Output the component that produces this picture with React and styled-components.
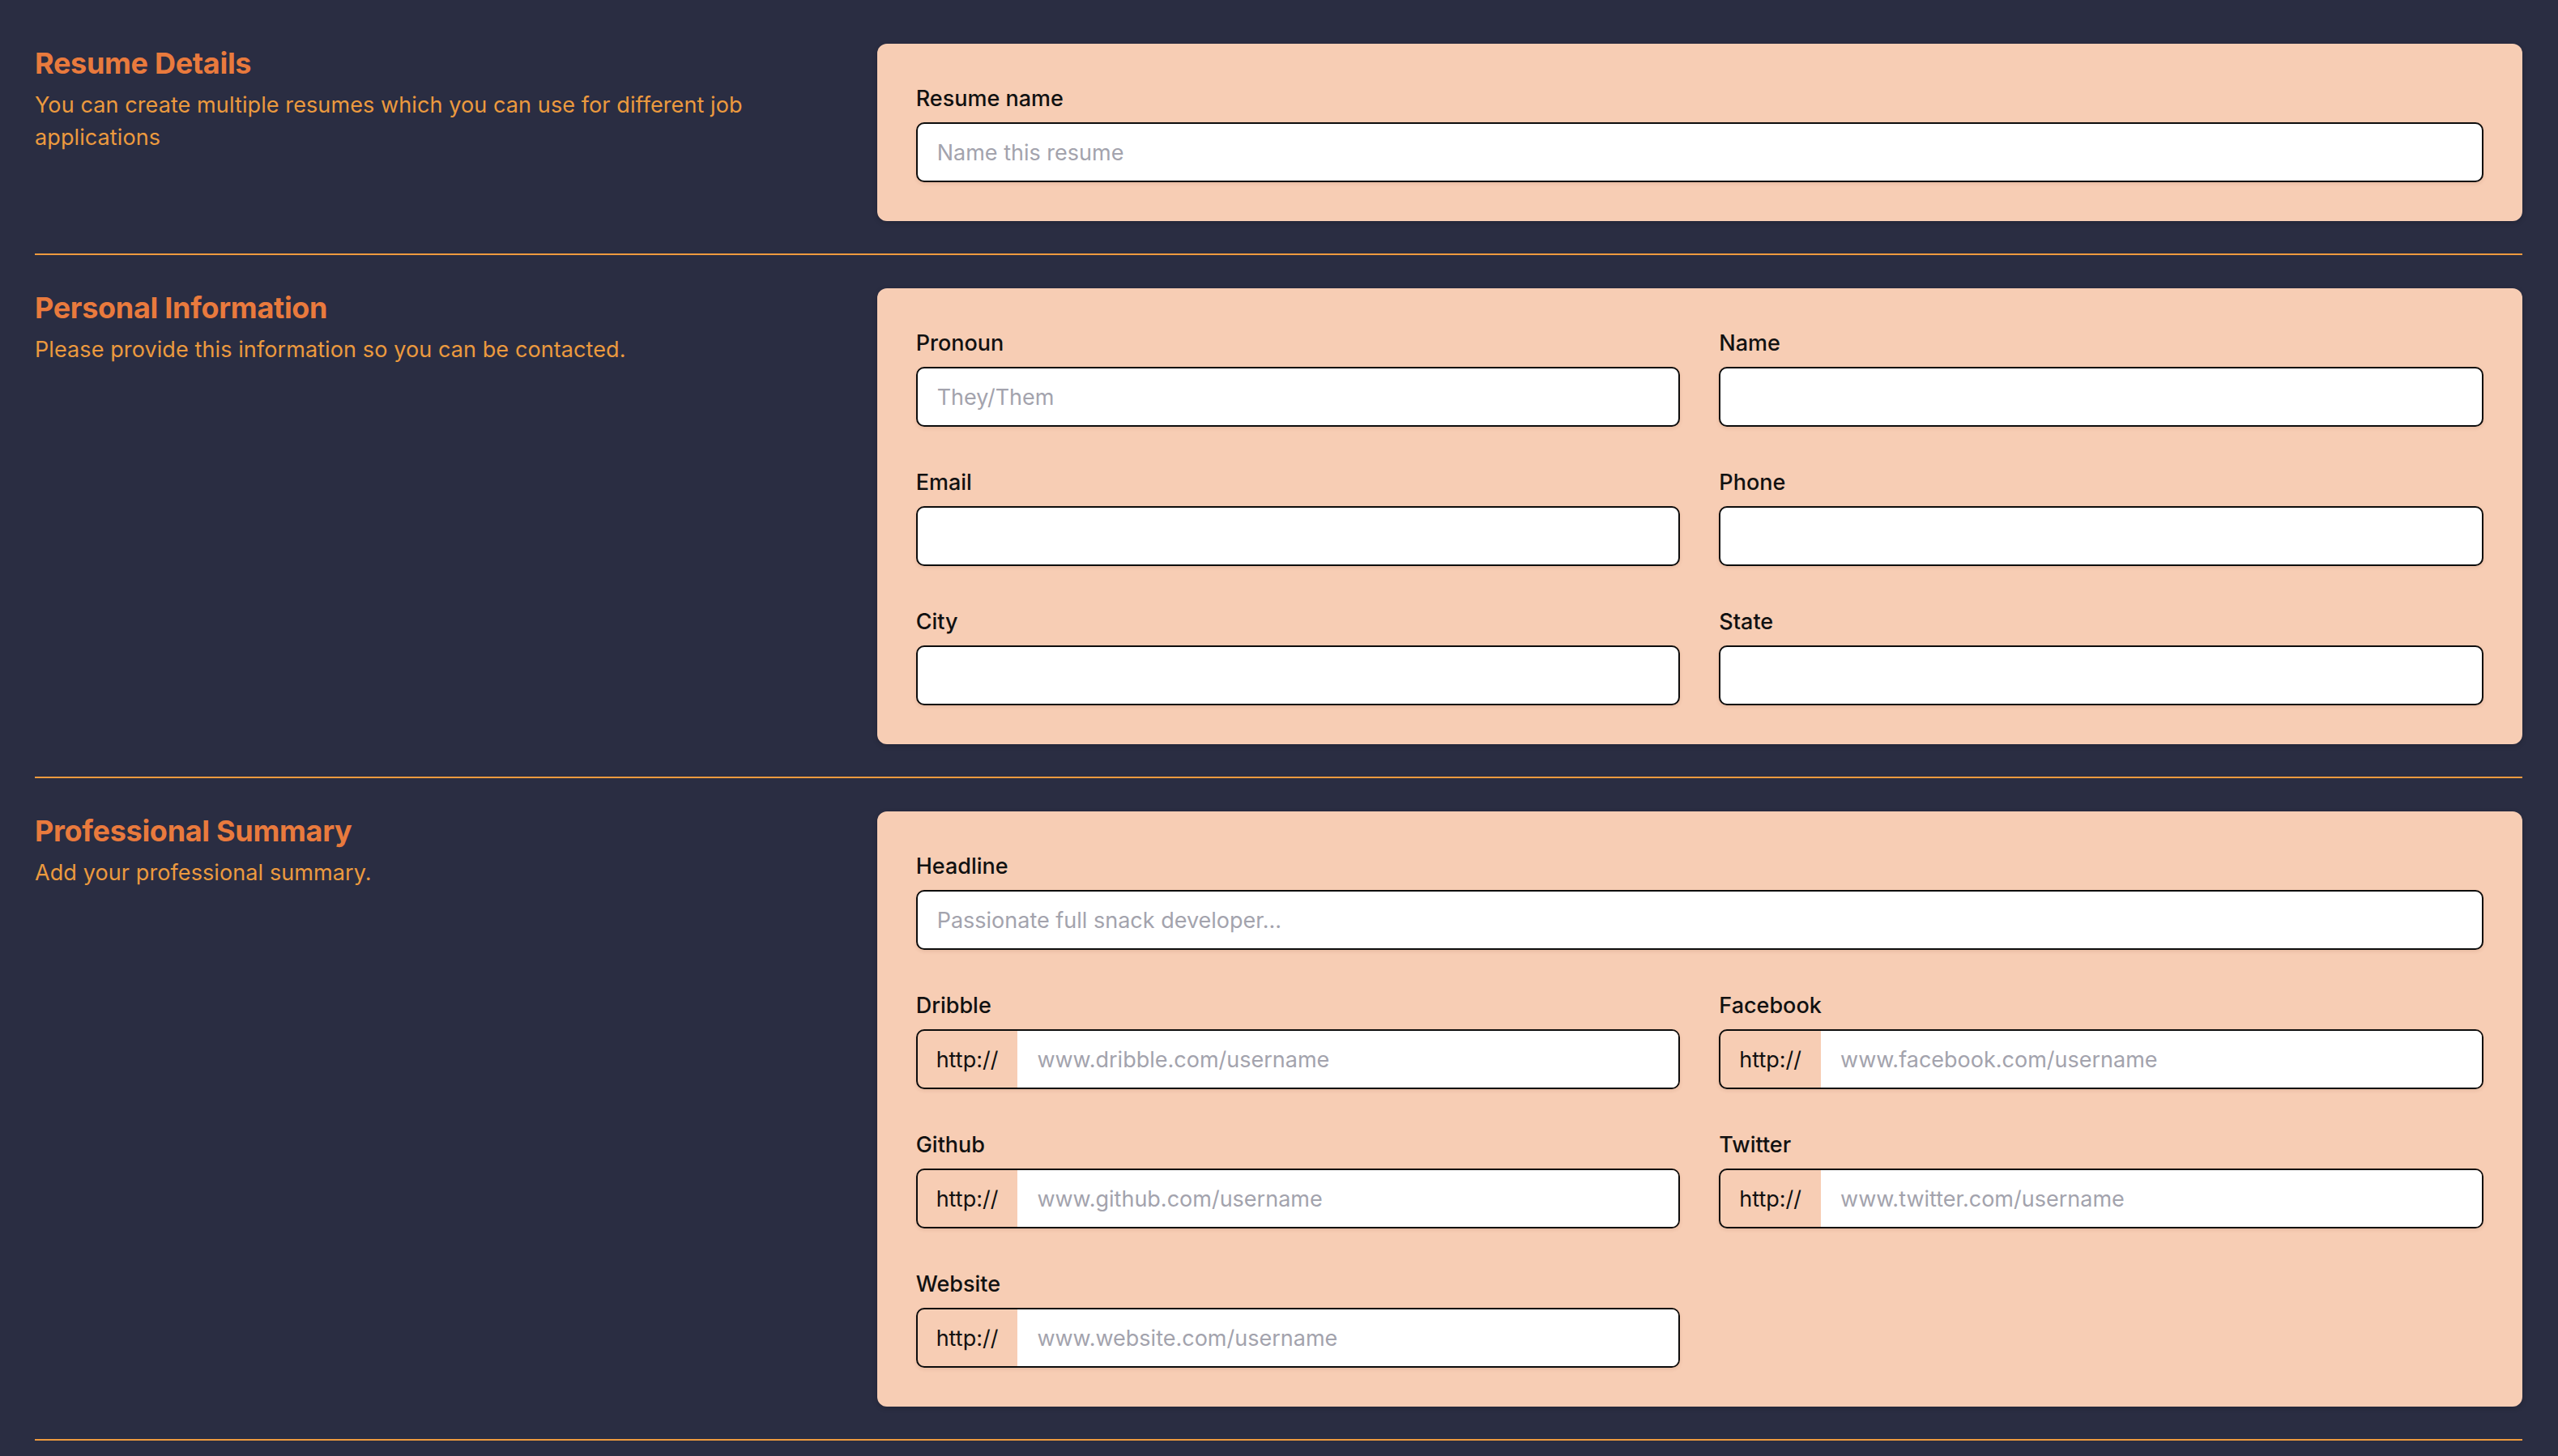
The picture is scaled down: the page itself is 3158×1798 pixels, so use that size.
import styled, { createGlobalStyle } from "styled-components";

const GlobalStyle = createGlobalStyle`
  * {
    box-sizing: border-box;
  }

  body {
    margin: 0;
    background: #2a2d42;
    font-family: Inter, "Noto Sans", sans-serif;
    -webkit-font-smoothing: antialiased;
  }
`;

const Page = styled.main`
  padding: 54px 44px 60px 43px;
`;

const Section = styled.section`
  display: grid;
  grid-template-columns: repeat(3, minmax(0, 1fr));
  column-gap: 48px;
  align-items: start;
`;

const Intro = styled.div`
  grid-column: span 1;
`;

const Title = styled.h3`
  margin: 0;
  font-size: 36px;
  line-height: 48px;
  font-weight: 700;
  letter-spacing: -0.3px;
  color: #e97a3d;
`;

const Description = styled.p`
  margin: 8px 0 0;
  font-size: 27px;
  line-height: 40px;
  font-weight: 400;
  letter-spacing: 0.1px;
  color: #ec9a3e;
`;

const Card = styled.div`
  grid-column: span 2;
  background: #f7cdb4;
  border-radius: 12px;
  padding: 48px;
  box-shadow: 0 2px 6px rgba(0, 0, 0, 0.18);
`;

const FieldGrid = styled.div`
  display: grid;
  grid-template-columns: repeat(2, minmax(0, 1fr));
  gap: 49px 48px;
`;

const Field = styled.div`
  grid-column: ${(p) => (p.$full ? "span 2" : "span 1")};
`;

const Label = styled.label`
  display: block;
  margin-bottom: 9px;
  font-size: 27px;
  line-height: 40px;
  font-weight: 500;
  color: #111111;
`;

const TextInput = styled.input`
  display: block;
  width: 100%;
  height: 74px;
  padding: 0 24px;
  border: 2px solid #0d0d0d;
  border-radius: 10px;
  background: #ffffff;
  font-family: inherit;
  font-size: 27px;
  color: #111111;
  box-shadow: 0 2px 4px rgba(120, 60, 30, 0.12);
  outline: none;

  &::placeholder {
    color: #a3a3ad;
  }
`;

const AddonGroup = styled.div`
  display: flex;
  height: 74px;
  border: 2px solid #0d0d0d;
  border-radius: 10px;
  overflow: hidden;
  box-shadow: 0 2px 4px rgba(120, 60, 30, 0.12);
`;

const Prefix = styled.span`
  display: flex;
  align-items: center;
  padding: 0 24px 0 23px;
  font-size: 27px;
  color: #111111;
`;

const AddonInput = styled(TextInput)`
  flex: 1;
  height: 100%;
  border: none;
  border-radius: 0;
  box-shadow: none;
`;

const Divider = styled.hr`
  margin: 40px 0 41px;
  border: none;
  height: 2px;
  background: #ee9a3e;
`;

const Input = ({ id, placeholder, addon }) =>
  addon ? (
    <AddonGroup>
      <Prefix>http://</Prefix>
      <AddonInput id={id} placeholder={placeholder} />
    </AddonGroup>
  ) : (
    <TextInput id={id} placeholder={placeholder} />
  );

const sections = [
  {
    title: "Resume Details",
    text: "You can create multiple resumes which you can use for different job applications",
    fields: [{ id: "resume", label: "Resume name", placeholder: "Name this resume", full: true }],
  },
  {
    title: "Personal Information",
    text: "Please provide this information so you can be contacted.",
    fields: [
      { id: "pronoun", label: "Pronoun", placeholder: "They/Them" },
      { id: "name", label: "Name" },
      { id: "email", label: "Email" },
      { id: "phone", label: "Phone" },
      { id: "city", label: "City" },
      { id: "state", label: "State" },
    ],
  },
  {
    title: "Professional Summary",
    text: "Add your professional summary.",
    fields: [
      { id: "headline", label: "Headline", placeholder: "Passionate full snack developer...", full: true },
      { id: "dribble", label: "Dribble", placeholder: "www.dribble.com/username", addon: true },
      { id: "facebook", label: "Facebook", placeholder: "www.facebook.com/username", addon: true },
      { id: "github", label: "Github", placeholder: "www.github.com/username", addon: true },
      { id: "twitter", label: "Twitter", placeholder: "www.twitter.com/username", addon: true },
      { id: "website", label: "Website", placeholder: "www.website.com/username", addon: true },
    ],
  },
];

const App = () => {
  return (
    <>
      <GlobalStyle />
      <Page>
        {sections.map((s) => (
          <div key={s.title}>
            <Section>
              <Intro>
                <Title>{s.title}</Title>
                <Description>{s.text}</Description>
              </Intro>
              <Card>
                <FieldGrid>
                  {s.fields.map((f) => (
                    <Field key={f.id} $full={f.full}>
                      <Label htmlFor={f.id}>{f.label}</Label>
                      <Input id={f.id} placeholder={f.placeholder} addon={f.addon} />
                    </Field>
                  ))}
                </FieldGrid>
              </Card>
            </Section>
            <Divider />
          </div>
        ))}
      </Page>
    </>
  );
};

export default App;
